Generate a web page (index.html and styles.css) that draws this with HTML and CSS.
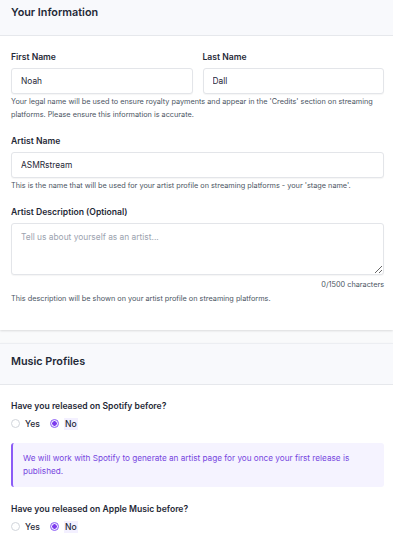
FILE: index.html
```html
<!DOCTYPE html>
<html lang="en">
<head>
    <meta charset="UTF-8">
    <meta name="viewport" content="width=device-width, initial-scale=1.0">
    <title>Artist Profile</title>
    <link rel="stylesheet" href="styles.css">
</head>
<body>

    <div class="page">
        <section class="card">
            <div class="card-header">
                <h2>Your Information</h2>
            </div>
            <div class="card-body">
                <div class="row">
                    <div class="field">
                        <label for="firstName">First Name</label>
                        <input type="text" id="firstName" value="Noah">
                    </div>
                    <div class="field">
                        <label for="lastName">Last Name</label>
                        <input type="text" id="lastName" value="Dall">
                    </div>
                </div>
                <p class="help">Your legal name will be used to ensure royalty payments and appear in the 'Credits' section on streaming platforms. Please ensure this information is accurate.</p>

                <div class="field group">
                    <label for="artistName">Artist Name</label>
                    <input type="text" id="artistName" value="ASMRstream">
                </div>
                <p class="help">This is the name that will be used for your artist profile on streaming platforms - your 'stage name'.</p>

                <div class="field group">
                    <label for="description">Artist Description (Optional)</label>
                    <textarea id="description" placeholder="Tell us about yourself as an artist..."></textarea>
                </div>
                <div class="counter"><span id="count">0</span>/1500 characters</div>
                <p class="help">This description will be shown on your artist profile on streaming platforms.</p>
            </div>
        </section>

        <section class="card">
            <div class="card-header">
                <h2>Music Profiles</h2>
            </div>
            <div class="card-body">
                <div class="question">Have you released on Spotify before?</div>
                <div class="radios">
                    <label class="radio"><input type="radio" name="spotify"><span>Yes</span></label>
                    <label class="radio"><input type="radio" name="spotify" checked><span>No</span></label>
                </div>
                <div class="notice">We will work with Spotify to generate an artist page for you once your first release is published.</div>

                <div class="question group">Have you released on Apple Music before?</div>
                <div class="radios">
                    <label class="radio"><input type="radio" name="apple"><span>Yes</span></label>
                    <label class="radio"><input type="radio" name="apple" checked><span>No</span></label>
                </div>
            </div>
        </section>
    </div>

    <script>
        document.getElementById("description").addEventListener("input", function() {
            document.getElementById("count").textContent = this.value.length;
        });
    </script>

</body>
</html>
```

FILE: styles.css
```css
body {
    margin: 0;
    background: #f9fafb;
    color: #1f2937;
    font-family: Inter, "Noto Sans", Arial, sans-serif;
}
.page {
    margin-top: -6px;
}
.card {
    background: white;
    box-shadow: 0 1px 2px rgba(0, 0, 0, 0.12);
    margin-bottom: 13px;
}
.card-header {
    height: 42px;
    box-sizing: border-box;
    display: flex;
    align-items: center;
    padding: 0 11px 5px;
    background: #f8f9fc;
    border-top: 1px solid #eceef2;
    border-bottom: 1px solid #e6e8ec;
}
.card-header h2 {
    margin: 0;
    font-size: 10.8px;
    font-weight: 600;
    color: #1f2937;
}
.card-body {
    padding: 15px 9px 25px 11px;
}
.row {
    display: flex;
    gap: 10px;
}
.field {
    display: flex;
    flex-direction: column;
    flex: 1;
}
.group {
    margin-top: 14px;
}
label,
.question {
    font-size: 8.6px;
    line-height: 12px;
    font-weight: 600;
    color: #1f2937;
}
.field label {
    margin-bottom: 5px;
}
input[type="text"],
textarea {
    box-sizing: border-box;
    height: 26px;
    padding: 0 9px;
    border: 1px solid #e3e5e9;
    border-radius: 3px;
    box-shadow: 0 1px 1px rgba(0, 0, 0, 0.04);
    font-family: inherit;
    font-size: 8.4px;
    color: #1f2937;
    background: white;
    outline: none;
}
textarea {
    height: 52px;
    padding: 8px 9px;
    resize: vertical;
}
textarea::placeholder {
    color: #9ca3af;
}
.help {
    margin: 1px 0 0;
    font-size: 7.3px;
    line-height: 13px;
    color: #4b5563;
}
.counter {
    margin-top: 4px;
    text-align: right;
    font-size: 7.3px;
    line-height: 12px;
    color: #4b5563;
}
.radios {
    display: flex;
    gap: 10px;
    margin-top: 5px;
    height: 13px;
    align-items: center;
}
.radio {
    display: flex;
    align-items: center;
    gap: 5px;
    font-weight: 500;
    cursor: pointer;
}
.radio input {
    appearance: none;
    margin: 0;
    width: 9px;
    height: 9px;
    border: 1px solid #d1d5db;
    border-radius: 50%;
    background: white;
}
.radio input:checked {
    border-color: #8b5cf6;
    background: radial-gradient(circle, #7c3aed 0 2px, #ede9fe 2.5px);
}
.radio input:checked + span {
    background: #f3f0ff;
    padding: 0 1px;
}
.notice {
    margin-top: 13px;
    padding: 9px 10px;
    background: #f5f3ff;
    border-left: 2px solid #8b5cf6;
    border-radius: 3px;
    color: #7546e0;
    font-size: 8.2px;
    line-height: 13px;
}
.question.group {
    margin-top: 16px;
}
```
